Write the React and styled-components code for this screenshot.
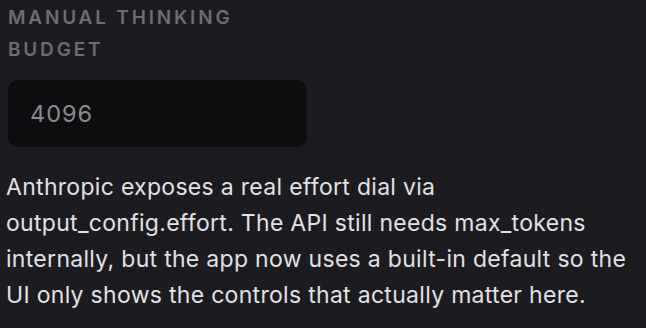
import React from 'react';
import styled, { createGlobalStyle } from 'styled-components';

const Global = createGlobalStyle`
  html, body {
    margin: 0;
    background: #1c1b20;
  }
  body {
    font-family: Inter, "Noto Sans", sans-serif;
  }
`;

const Panel = styled.div`
  width: 646px;
  height: 328px;
  box-sizing: border-box;
  padding: 2px 0 0 6px;
  background: #1c1b20;
  overflow: hidden;
`;

const Field = styled.div`
  width: 299px;
  display: flex;
  flex-direction: column;
  margin-left: 2px;
`;

const Label = styled.div`
  font-size: 19px;
  line-height: 32px;
  font-weight: 600;
  letter-spacing: 2.8px;
  text-transform: uppercase;
  color: #6e6d77;
  width: 260px;
`;

const Input = styled.input`
  margin-top: 14px;
  height: 67px;
  box-sizing: border-box;
  border: none;
  border-radius: 10px;
  background: #0e0e10;
  color: #8b8b8e;
  font-family: Inter, sans-serif;
  font-size: 23.5px;
  letter-spacing: 1px;
  padding: 0 22px;
  outline: none;
`;

const Help = styled.p`
  margin: 22px 0 0;
  font-family: Inter, "Noto Sans", sans-serif;
  font-size: 23px;
  line-height: 36px;
  letter-spacing: 0.3px;
  color: #e2e1e6;
  max-width: 636px;
`;

export default function App() {
  return (
    <>
      <Global />
      <Panel>
        <Field>
          <Label>Manual thinking budget</Label>
          <Input type="text" defaultValue="4096" />
        </Field>
        <Help>
          Anthropic exposes a real effort dial via output_config.effort. The API still needs
          max_tokens internally, but the app now uses a built-in default so the UI only shows the
          controls that actually matter here.
        </Help>
      </Panel>
    </>
  );
}
